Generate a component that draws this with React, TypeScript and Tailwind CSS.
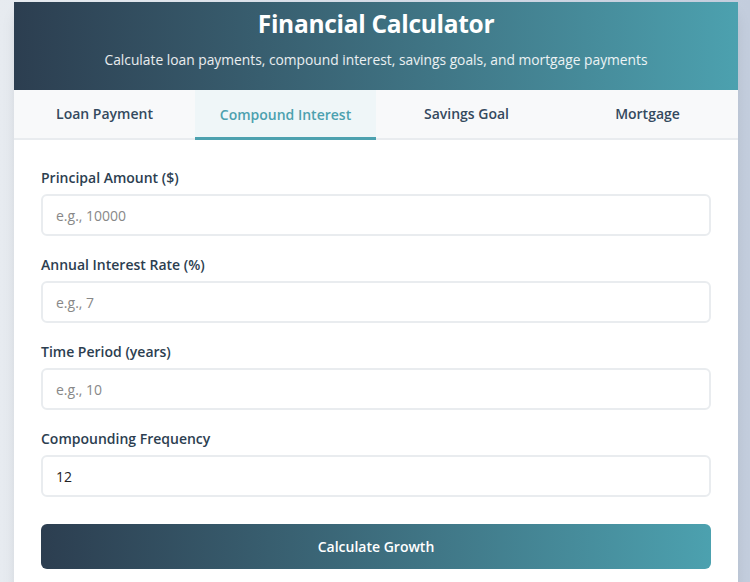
import React from "react";

const fields = [
  { label: "Principal Amount ($)", placeholder: "e.g., 10000", value: "" },
  { label: "Annual Interest Rate (%)", placeholder: "e.g., 7", value: "" },
  { label: "Time Period (years)", placeholder: "e.g., 10", value: "" },
  { label: "Compounding Frequency", placeholder: "", value: "12" },
];

const tabs = ["Loan Payment", "Compound Interest", "Savings Goal", "Mortgage"];

export default function App() {
  return (
    <div
      className="w-[750px] h-[582px] overflow-hidden bg-gradient-to-r from-[#e7ebf0] to-[#c3cddd] pt-[2px]"
      style={{ fontFamily: '"Open Sans", "Noto Sans", sans-serif' }}
    >
      <div className="ml-[14px] w-[724px] bg-white shadow-lg">
        <div className="h-[88px] bg-gradient-to-r from-[#2c3e50] to-[#4ca1af] text-white text-center flex flex-col items-center">
          <h1 className="mt-[5px] text-[24.5px] leading-[34px] font-bold tracking-[-0.3px]">Financial Calculator</h1>
          <p className="mt-[9px] text-[13.8px] leading-[20px] text-white/90">
            Calculate loan payments, compound interest, savings goals, and mortgage payments
          </p>
        </div>
        <div className="flex bg-[#f8f9fa] border-b-2 border-[#e9ecef] h-[50px]">
          {tabs.map((t, i) => (
            <div
              key={t}
              className={
                i === 1
                  ? "flex-1 flex items-center justify-center text-[14px] font-semibold text-[#4ca1af] bg-[#eff6f8] border-b-[3px] border-[#4ca1af] -mb-[2px] pt-[1px]"
                  : "flex-1 flex items-center justify-center text-[14px] font-semibold text-[#34495e] pb-[2px]"
              }
            >
              {t}
            </div>
          ))}
        </div>
        <div className="px-[27px] pt-[28px] pb-[20px] flex flex-col gap-[19px]">
          {fields.map((f) => (
            <div key={f.label} className="flex flex-col">
              <label className="text-[14px] leading-[20px] font-semibold text-[#2c3e50] mb-[6px]">{f.label}</label>
              <input
                readOnly
                value={f.value}
                placeholder={f.placeholder}
                className="h-[42px] w-full rounded-[6px] border-2 border-[#e9ecef] px-[13px] text-[14px] text-[#222] placeholder:text-[#888] outline-none"
              />
            </div>
          ))}
          <button className="mt-[8px] h-[45px] w-full rounded-[6px] bg-gradient-to-r from-[#2c3e50] to-[#4ca1af] text-white text-[14px] font-semibold">
            Calculate Growth
          </button>
        </div>
      </div>
    </div>
  );
}
